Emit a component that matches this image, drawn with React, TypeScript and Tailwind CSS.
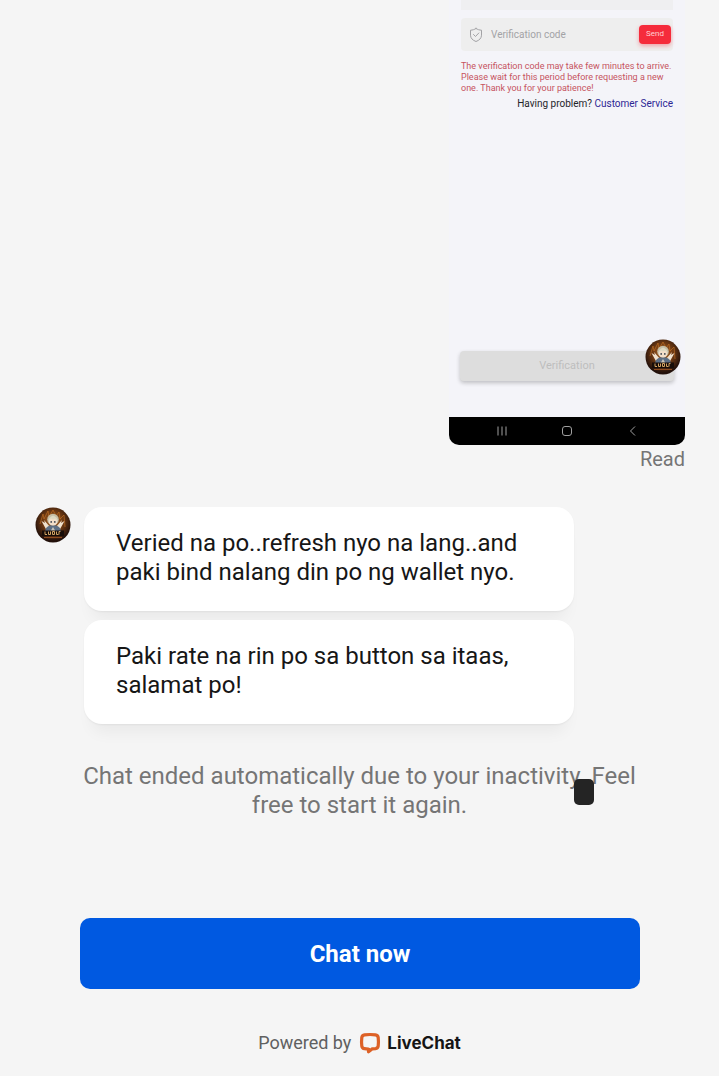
import React from "react";

function Avatar() {
  return (
    <svg viewBox="0 0 36 36" className="size-9 shrink-0" role="img" aria-label="Agent">
      <defs>
        <radialGradient id="glow" cx="50%" cy="40%" r="55%">
          <stop offset="0" stopColor="#b06c2c" />
          <stop offset="0.55" stopColor="#6b3812" />
          <stop offset="1" stopColor="#22100a" />
        </radialGradient>
      </defs>
      <circle cx="18" cy="18" r="17.500" fill="url(#glow)" />
      <path d="M5 17 8 7l1 5 4-8 1 6 4-7 3 6 3-4 1 7 4-4 1 12" fill="none" stroke="#c87527" strokeWidth="1" opacity="0.6" />
      <path d="M12 24 6.500 14l3.500 2-1-3 6 7zM24 24l5.500-10-3.500 2 1-3-6 7z" fill="#f0e2cf" />
      <path d="M10 25c0-4 3-7 8-7s8 3 8 7z" fill="#5d6f84" />
      <path d="M15 25l3-5 3 5z" fill="#c8c4b8" />
      <circle cx="18" cy="12.500" r="5.800" fill="#c5bea6" />
      <ellipse cx="18" cy="14.500" rx="4.200" ry="4" fill="#f3dfc9" />
      <path d="M13 14.500c1-4 3-5 5-6 3 1 5 3 5 6l-3-3-2 1-2-1z" fill="#ded9c2" />
      <circle cx="16.200" cy="14.900" r="0.900" fill="#3c4650" />
      <circle cx="19.800" cy="14.900" r="0.900" fill="#3c4650" />
      <path d="M7 23.500h22v5.500H7z" fill="#180d08" />
      <path d="M10 24.500v3h2m1.500-3v3h2v-3m2 0v3h2v-3h-2m4 0v3h2m2-3h-1.500v3" fill="none" stroke="#d0a363" strokeWidth="1" />
      <path d="M9 30.500h18" stroke="#8c4b20" strokeWidth="1.200" />
    </svg>
  );
}

function ShieldIcon() {
  return (
    <svg viewBox="0 0 14 16" className="h-4 w-3.5 shrink-0" fill="none" stroke="#a2a2a5" strokeWidth="1" strokeLinecap="round" strokeLinejoin="round" aria-hidden="true">
      <path d="M7 1.5c1.7 1.1 3.4 1.6 5.5 1.7v5c0 3-2.2 5.1-5.5 6.3-3.3-1.2-5.5-3.3-5.5-6.3v-5C3.600 3.100 5.300 2.600 7 1.500z" />
      <path d="m4.500 7.500 2 2 3.300-3.500" />
    </svg>
  );
}

function LiveChatIcon() {
  return (
    <svg viewBox="0 0 22 22" className="size-[22px]" aria-hidden="true">
      <path d="M5.500 2.800Q11 2.200 16.500 2.800 18.900 3.100 19.200 5.500 19.700 9.800 19.200 14 18.900 16.300 16.500 16.600L13 16.900 9.500 19.700V17Q7.200 16.900 5.500 16.700 3.100 16.400 2.800 14 2.300 9.800 2.800 5.500 3.100 3.100 5.500 2.800Z" fill="none" stroke="#dd6126" strokeWidth="3.200" strokeLinejoin="round" />
    </svg>
  );
}

function Attachment() {
  return (
    <div className="w-[236px] overflow-hidden rounded-b-[10px] bg-[#f4f4f9]">
      <div className="px-3">
        <div className="h-2.5 bg-[#efeff1]" />
        <div className="mt-2 flex h-[33px] items-center gap-2 rounded-sm bg-[#eeeeee] pr-0.5 pl-2">
          <ShieldIcon />
          <input aria-label="Verification code" placeholder="Verification code" className="min-w-0 flex-1 bg-transparent text-[10px] outline-none placeholder:text-[#a3a3a6]" />
          <button className="h-[19px] w-8 rounded-[4px] bg-[#f52b3b] pb-0.5 text-[8px] text-[#ffd0d2] shadow-[0_2px_4px_#f52b3b66]">Send</button>
        </div>
        <p className="mt-2.5 text-[9px] leading-[11px] whitespace-nowrap text-[#c65360]">
          The verification code may take few minutes to arrive.
          <br />
          Please wait for this period before requesting a new
          <br />
          one. Thank you for your patience!
        </p>
        <p className="mt-0.5 text-right text-[10px] leading-4 whitespace-nowrap text-[#242429]">
          Having problem? <a href="#service" className="text-[#2c2695]">Customer Service</a>
        </p>
      </div>
      <div className="relative mt-[239px] px-[11px]">
        <button className="block h-[30px] w-full rounded-[4px] bg-[#dddddd] text-[11px] text-[#bdbdbd] shadow-[0_2px_4px_#00000038]">Verification</button>
        <div className="absolute -top-3 right-1">
          <Avatar />
        </div>
      </div>
      <div className="mt-9 flex h-7 items-center justify-around bg-black px-5 text-[#a0a0a0]">
        <svg viewBox="0 0 12 12" className="size-3" fill="none" stroke="currentColor" aria-hidden="true"><path d="M2 1.500v9M6 1.500v9M10 1.500v9" /></svg>
        <svg viewBox="0 0 12 12" className="size-3" fill="none" stroke="currentColor" aria-hidden="true"><rect x="1.500" y="1.500" width="9" height="9" rx="2.500" /></svg>
        <svg viewBox="0 0 12 12" className="size-3" fill="none" stroke="currentColor" aria-hidden="true"><path d="M9 1.500 4.500 6 9 10.500" /></svg>
      </div>
    </div>
  );
}

function Bubble({ children }: { children: React.ReactNode }) {
  return (
    <div className="rounded-[18px] bg-white px-8 pt-[22px] pb-6 text-2xl leading-[29px] text-[#161616] shadow-[0_16px_16px_-8px_#0000000d,0_1px_2px_#0000000d]">
      {children}
    </div>
  );
}

export default function App() {
  return (
    <main className="flex min-h-screen flex-col bg-[#f5f5f5] font-['Roboto',sans-serif]">
      <section className="flex flex-col items-end pr-[34px]">
        <Attachment />
        <span className="text-xl leading-7 text-[#757575]">Read</span>
      </section>
      <section className="mt-[34px] flex items-start gap-[13px] pl-[35px]">
        <Avatar />
        <div className="flex w-[490px] max-w-full flex-col gap-[9px]">
          <Bubble>Veried na po..refresh nyo na lang..and paki bind nalang din po ng wallet nyo.</Bubble>
          <Bubble>Paki rate na rin po sa button sa itaas,<br />salamat po!</Bubble>
        </div>
      </section>
      <div className="relative mt-[38px] px-16 text-center text-2xl leading-[29px] text-[#757575]">
        <p>Chat ended automatically due to your inactivity. Feel<br />free to start it again.</p>
        <span className="absolute top-[17px] left-[574px] h-[26px] w-5 rounded-[5px] bg-[#242424]" />
      </div>
      <div className="mt-[98px] px-[79px] pl-20">
        <button className="h-[71px] w-full rounded-[10px] bg-[#0059e1] text-2xl font-bold text-white">Chat now</button>
      </div>
      <footer className="mt-10 flex items-center justify-center gap-2 pb-5 text-lg leading-7 text-[#606060]">
        Powered by
        <a href="#livechat" className="flex items-center gap-1.5 font-['Inter',sans-serif] text-[17px] font-bold text-[#151515]">
          <LiveChatIcon />
          LiveChat
        </a>
      </footer>
    </main>
  );
}
